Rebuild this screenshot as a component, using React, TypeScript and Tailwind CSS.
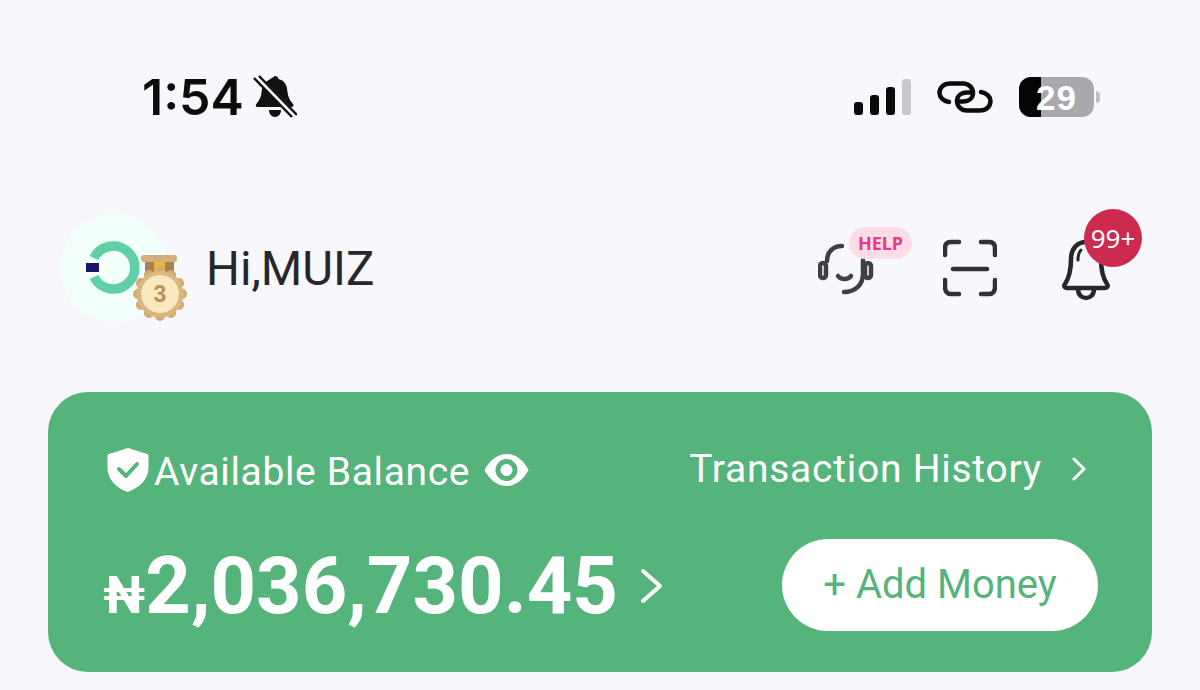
import React from 'react';

const scallops = Array.from({ length: 12 }, (_, i) => {
    const a = (i * Math.PI) / 6;
    return { x: 100 + 22 * Math.cos(a), y: 80 + 22 * Math.sin(a) };
});

function BellOff() {
    return (
        <svg width="44" height="44" viewBox="0 0 44 44" fill="none">
            <path d="M22 1c2 0 3.200 1.300 3.400 3 6 1.400 8.600 6 9 12 .4 5.500 2 9 5.600 13 1 1.200.5 3-1.200 3H4.500c-1.700 0-2.200-1.800-1.200-3 3.500-4 5-7.500 5.400-13 .3-4 1.300-6.500 3.600-8.800" fill="#111" />
            <path d="M16 35h12c0 4-2.500 7-6 7s-6-3-6-7z" fill="#111" />
            <path d="M3 1l39 40" stroke="#f7f7fc" strokeWidth="6" />
            <path d="M1 3l38 39M6 1l38 39" stroke="#111" strokeWidth="2.500" />
        </svg>
    );
}

function StatusIcons() {
    return (
        <div className="flex items-center gap-[26px]">
            <div className="flex items-end gap-[7px] h-[36px]">
                <div className="w-[9px] h-[13px] rounded-[3px] bg-[#0b0b0b]" />
                <div className="w-[9px] h-[20px] rounded-[3px] bg-[#0b0b0b]" />
                <div className="w-[9px] h-[28px] rounded-[3px] bg-[#0b0b0b]" />
                <div className="w-[9px] h-[36px] rounded-[3px] bg-[#c8c8cc]" />
            </div>
            <svg width="56" height="32" viewBox="0 0 56 32" fill="none" stroke="#0b0b0b" strokeWidth="4.500" strokeLinecap="round">
                <path d="M12 21C6 20 2.500 16 2.500 12 2.500 6.500 7 2.500 13 2.500h13C32 2.500 36 7 36 12c0 5-4 8.500-10 8.500h-5" />
                <path d="M44 11c6 1 9.500 5 9.500 9 0 5.500-4.500 9.500-10.500 9.500H30c-6 0-10-4.500-10-9.500 0-5 4-8.500 10-8.500h5" />
            </svg>
            <div className="flex items-center gap-[2px]">
                <div className="relative w-[75px] h-[40px] rounded-[12px] overflow-hidden bg-[#a9a9ad] flex items-center justify-center">
                    <div className="absolute left-0 top-0 bottom-0 w-[22px] bg-[#050505]" />
                    <span className="relative text-white font-bold text-[35px] leading-none font-['Liberation_Sans',sans-serif] tracking-[1px]">29</span>
                </div>
                <div className="w-[4px] h-[12px] rounded-r-full bg-[#c0c0c4]" />
            </div>
        </div>
    );
}

function Avatar() {
    return (
        <div className="relative w-[108px] h-[108px] rounded-full bg-[#f3fffa] shrink-0">
            <svg className="absolute left-0 top-0 overflow-visible" width="130" height="110" viewBox="0 0 130 110" fill="none">
                {/* ring with gap on the left */}
                <path d="M34 44A21.500 21.500 0 1 1 34 63" stroke="#5fcfa5" strokeWidth="9.500" />
                <rect x="26" y="49" width="13" height="9" fill="#1c1468" />
                {/* medal */}
                <rect x="85" y="45" width="29" height="14" fill="#a5834f" />
                <rect x="94" y="47" width="11" height="12" fill="#e6b447" />
                <rect x="81" y="41" width="36" height="7" rx="3" fill="#d4ae7a" />
                {scallops.map((s, i) => (
                    <circle key={i} cx={s.x} cy={s.y} r="5" fill="#d0ab72" />
                ))}
                <circle cx="100" cy="80" r="23.500" fill="#d9b87f" />
                <circle cx="100" cy="80" r="19" fill="#fbe8bd" />
                <text x="100" y="88" textAnchor="middle" fontFamily="Liberation Sans, sans-serif" fontWeight="700" fontSize="23" fill="#b5935a">3</text>
            </svg>
        </div>
    );
}

function HeaderActions() {
    return (
        <div className="flex items-start gap-[31px]">
            <div className="relative w-[94px] h-[108px]">
                <svg width="60" height="108" viewBox="0 0 60 108" fill="none" stroke="#3f3f44" strokeWidth="4.500" strokeLinecap="round">
                    <path d="M9 47c0-10 7-15 15-15" />
                    <rect x="2" y="49" width="6" height="15" rx="3" />
                    <rect x="47" y="49" width="6" height="15" rx="3" />
                    <path d="M20 62c3 4 10 4 13 0" />
                    <path d="M45 46v14c0 11-8 18-19 18" />
                </svg>
                <div className="absolute left-[31px] top-[13px] w-[63px] h-[32px] rounded-full bg-[#fbdde8] flex items-center justify-center">
                    <span className="text-[#e8398a] font-bold text-[18px] leading-none font-['Noto_Sans',sans-serif]">HELP</span>
                </div>
            </div>
            <svg width="54" height="108" viewBox="0 0 54 108" fill="none" stroke="#2f3136" strokeWidth="4.500" strokeLinecap="round">
                <path d="M2 41v-7c0-4 2-6 6-6h8" />
                <path d="M38 28h8c4 0 6 2 6 6v7" />
                <path d="M2 66v7c0 4 2 7 6 7h8" />
                <path d="M38 80h8c4 0 6-3 6-7v-7" />
                <path d="M10 55h34" />
            </svg>
            <div className="relative w-[80px] h-[108px] ml-[34px]">
                <svg width="50" height="108" viewBox="0 0 50 108" fill="none" stroke="#26272b" strokeWidth="4.500" strokeLinecap="round" strokeLinejoin="round">
                    <path d="M24 28c-9 0-15 7-15 17 0 13-2 19-6 25-1.500 2-.5 4 2 4h38c2.500 0 3.500-2 2-4-4-6-6-12-6-25 0-10-6-17-15-17z" />
                    <path d="M16 75c0 6 4 9 8 9s8-3 8-9" />
                    <path d="M16 46c0-5 1-8 3-10" strokeWidth="3" />
                </svg>
                <div className="absolute left-[22px] top-[-5px] w-[58px] h-[58px] rounded-full bg-[#cc2a4e] flex items-center justify-center">
                    <span className="text-white text-[26px] leading-none font-['Noto_Sans',sans-serif]">99+</span>
                </div>
            </div>
        </div>
    );
}

export default function App() {
    return (
        <div className="w-[1200px] h-[690px] bg-[#f7f7fc] overflow-hidden flex flex-col">
            {/* status bar */}
            <div className="mt-[72px] h-[50px] pl-[142px] pr-[100px] flex items-center justify-between">
                <div className="flex items-center gap-[9px]">
                    <span className="text-[50px] leading-none font-semibold text-[#0b0b0b] font-['Inter',sans-serif]">1:54</span>
                    <BellOff />
                </div>
                <StatusIcons />
            </div>

            {/* greeting row */}
            <div className="mt-[92px] h-[108px] pl-[60px] pr-[58px] flex items-center justify-between">
                <div className="flex items-center gap-[38px]">
                    <Avatar />
                    <span className="mt-[3px] text-[47.500px] leading-none text-[#26272b] font-['Roboto',sans-serif]">Hi,MUIZ</span>
                </div>
                <HeaderActions />
            </div>

            {/* balance card */}
            <div className="mt-[70px] mx-[48px] h-[280px] rounded-[40px] bg-[#54b47c] pt-[50px] pl-[55px] pr-[54px] text-white font-['Roboto',sans-serif]">
                <div className="h-[56px] flex items-center justify-between">
                    <div className="flex items-center">
                        <svg className="ml-[4px]" width="42" height="46" viewBox="0 0 42 46">
                            <path d="M21 1l19 6c1 0 1.500 1 1.500 2v12c0 11-9 20-21 24C9 41 .5 32 .5 21V9c0-1 .5-2 1.500-2z" fill="#fff" />
                            <path d="M12 22l7 7 11-12" fill="none" stroke="#54b47c" strokeWidth="4" strokeLinecap="round" strokeLinejoin="round" />
                        </svg>
                        <span className="ml-[5px] mt-[5px] text-[39px] leading-none tracking-[0.650px]">Available Balance</span>
                        <svg className="ml-[14px]" width="45" height="36" viewBox="0 0 45 36">
                            <path d="M22.500 2C32 2 40 9 44.500 18 40 27 32 34 22.500 34 13 34 5 27 .5 18 5 9 13 2 22.500 2z" fill="#fff" />
                            <circle cx="22.500" cy="18" r="8.500" fill="none" stroke="#54b47c" strokeWidth="5" />
                        </svg>
                    </div>
                    <div className="flex items-center mr-[12px] mb-[2px]">
                        <span className="text-[39px] leading-none tracking-[0.750px]">Transaction History</span>
                        <svg className="ml-[30px]" width="14" height="24" viewBox="0 0 14 24" fill="none" stroke="#fff" strokeWidth="3" strokeLinecap="round" strokeLinejoin="round">
                            <path d="M2 2l10 10L2 22" />
                        </svg>
                    </div>
                </div>
                <div className="mt-[41px] h-[92px] flex items-center justify-between">
                    <div className="flex items-baseline mt-[1px]">
                        <span className="text-[52px] leading-none font-bold">₦</span>
                        <span className="text-[79.500px] leading-none font-bold">2,036,730.45</span>
                        <svg className="ml-[22px] self-center" width="24" height="36" viewBox="0 0 24 36" fill="none" stroke="#fff" strokeWidth="4" strokeLinecap="round" strokeLinejoin="round">
                            <path d="M3 3l17 15L3 33" />
                        </svg>
                    </div>
                    <button className="w-[316px] h-[92px] rounded-full bg-white text-[#54b47c] text-[40px] leading-none">
                        + Add Money
                    </button>
                </div>
            </div>
        </div>
    );
}
